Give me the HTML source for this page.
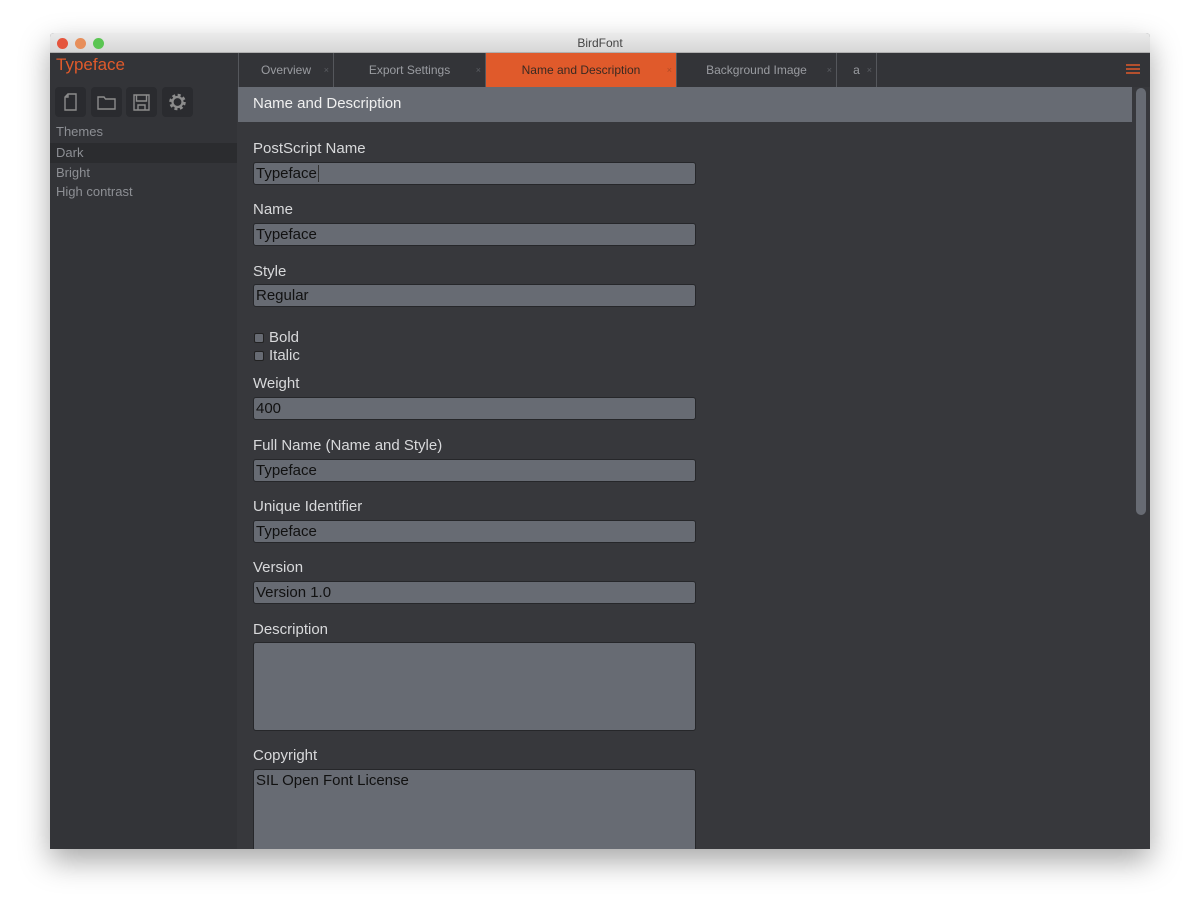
<!DOCTYPE html>
<html><head><meta charset="utf-8"><style>
*{box-sizing:border-box;margin:0;padding:0}
body{width:1200px;height:915px;background:#fff;position:relative;overflow:hidden;font-family:"Liberation Sans",sans-serif}
.win{position:absolute;left:50px;top:33px;width:1100px;height:816px;background:#37383c;box-shadow:0 12px 30px rgba(0,0,0,.35);overflow:hidden;border-radius:4px 4px 0 0}
.title{position:absolute;left:0;top:0;width:1100px;height:20px;background:linear-gradient(#ebebeb,#d6d6d6);border-bottom:1px solid #b0b0b0;text-align:center;font-size:12px;line-height:20px;color:#444}
.dot{position:absolute;top:5px;width:11px;height:11px;border-radius:50%}
.side{position:absolute;left:0;top:20px;width:187px;height:796px;background:#333438}
.abs{position:absolute}
.btn{position:absolute;top:34px;width:31px;height:30px;background:#2a2b2f;border-radius:4px}
.st{position:absolute;left:6px;font-size:13px;color:#8d8f94}
.tab{position:absolute;top:20px;height:34px;border-right:1px solid #55575c;color:#9a9ca1;font-size:12px;line-height:34px;text-align:center}
.tab i{position:absolute;right:4px;font-style:normal;font-size:9px;color:#5c5e63}
.lbl{position:absolute;left:203px;font-size:15px;color:#d8d9db}
.inp{position:absolute;left:203px;width:443px;height:23px;background:#676b73;border:1px solid #26272a;border-radius:3px;font-size:15px;color:#111;line-height:21px;padding-left:2px}
.cb{position:absolute;left:204px;width:10px;height:10px;border:1px solid #222;border-radius:2px;background:#676b73}
</style></head><body>
<div class="win">
<div class="title">BirdFont
<div class="dot" style="left:7px;background:#e5553d"></div>
<div class="dot" style="left:25px;background:#e78e5a"></div>
<div class="dot" style="left:43px;background:#5ac552"></div>
</div>
<div class="side">
<div class="abs" style="left:6px;top:2px;font-size:17px;color:#e05a2b">Typeface</div>
<div class="btn" style="left:5px"><svg width="31" height="30"><path d="M13 7h8v16h-11v-13z M13 7v3h-3" fill="none" stroke="#8c8c8c" stroke-width="1.4"/></svg></div>
<div class="btn" style="left:41px"><svg width="31" height="30"><path d="M7 10h6l1.5 2h9.5v10h-17z" fill="none" stroke="#8c8c8c" stroke-width="1.4"/></svg></div>
<div class="btn" style="left:76px"><svg width="31" height="30"><path d="M8 8h15v15h-15z M10.5 8v6h10v-6 M12 23v-5h7v5" fill="none" stroke="#8c8c8c" stroke-width="1.4"/></svg></div>
<div class="btn" style="left:112px"><svg width="31" height="30"><circle cx="15.5" cy="15" r="6.5" fill="none" stroke="#8c8c8c" stroke-width="3.5" stroke-dasharray="2.8 2.3"/><circle cx="15.5" cy="15" r="5" fill="none" stroke="#8c8c8c" stroke-width="2.2"/></svg></div>
<div class="st" style="top:71px">Themes</div>
<div class="abs" style="left:0;top:90px;width:187px;height:20px;background:#2b2c2f"></div>
<div class="st" style="top:92px">Dark</div>
<div class="st" style="top:112px">Bright</div>
<div class="st" style="top:131px">High contrast</div>
</div>
<div class="abs" style="left:187px;top:20px;width:913px;height:34px;background:#333438"></div>
<div class="tab" style="left:188px;width:96px;border-left:1px solid #55575c">Overview<i>×</i></div>
<div class="tab" style="left:284px;width:152px">Export Settings<i>×</i></div>
<div class="tab" style="left:436px;width:191px;background:#e05a2b;color:#3a2a22">Name and Description<i style="color:#b04a25">×</i></div>
<div class="tab" style="left:627px;width:160px">Background Image<i>×</i></div>
<div class="tab" style="left:787px;width:40px">a<i>×</i></div>
<svg class="abs" style="left:1076px;top:31px" width="14" height="10"><path d="M0 1h14M0 5h14M0 9h14" stroke="#e05a2b" stroke-width="1.5"/></svg>
<div class="abs" style="left:188px;top:54px;width:894px;height:35px;background:#676b73;color:#f0f0f0;font-size:15px;line-height:34px;padding-left:15px">Name and Description</div>
<div class="abs" style="left:1086px;top:55px;width:10px;height:427px;background:#676b73;border-radius:5px"></div>
<div class="lbl" style="top:107px">PostScript Name</div><div class="inp" style="top:129px">Typeface<span style="border-left:1px solid #333;margin-left:1px"></span></div>
<div class="lbl" style="top:168px">Name</div><div class="inp" style="top:190px">Typeface</div>
<div class="lbl" style="top:230px">Style</div><div class="inp" style="top:251px">Regular</div>
<div class="cb" style="top:300px"></div><div class="lbl" style="left:219px;top:296px">Bold</div>
<div class="cb" style="top:318px"></div><div class="lbl" style="left:219px;top:314px">Italic</div>
<div class="lbl" style="top:342px">Weight</div><div class="inp" style="top:364px">400</div>
<div class="lbl" style="top:404px">Full Name (Name and Style)</div><div class="inp" style="top:426px">Typeface</div>
<div class="lbl" style="top:465px">Unique Identifier</div><div class="inp" style="top:487px">Typeface</div>
<div class="lbl" style="top:526px">Version</div><div class="inp" style="top:548px">Version 1.0</div>
<div class="lbl" style="top:588px">Description</div><div class="inp" style="top:609px;height:89px"></div>
<div class="lbl" style="top:714px">Copyright</div><div class="inp" style="top:736px;height:100px">SIL Open Font License</div>
</div>
</body></html>
